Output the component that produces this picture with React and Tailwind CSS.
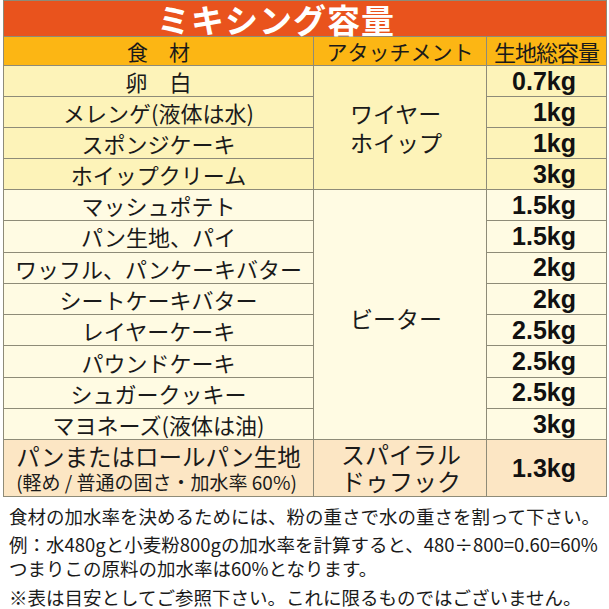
import React from "react";

const font = { fontFamily: '"Noto Sans CJK JP", "Noto Sans", sans-serif' };

const whipRows = [
  ["卵　白", "0.7kg"],
  ["メレンゲ(液体は水)", "1kg"],
  ["スポンジケーキ", "1kg"],
  ["ホイップクリーム", "3kg"],
];

const beaterRows = [
  ["マッシュポテト", "1.5kg"],
  ["パン生地、パイ", "1.5kg"],
  ["ワッフル、パンケーキバター", "2kg"],
  ["シートケーキバター", "2kg"],
  ["レイヤーケーキ", "2.5kg"],
  ["パウンドケーキ", "2.5kg"],
  ["シュガークッキー", "2.5kg"],
  ["マヨネーズ(液体は油)", "3kg"],
];

const cell = "border border-[#8e8b78]";
const kg =
  "pr-[30px] text-right font-bold text-[25px] leading-none text-[#111] [font-family:'Liberation_Sans',Arial,sans-serif]";

const App = () => {
  return (
    <div className="w-[609px] h-[609px] bg-white text-[#1a1a1a] overflow-hidden" style={font}>
      <div className="pl-[3px] pr-[3px]">
        <table className="w-[603px] border-collapse table-fixed">
          <colgroup>
            <col className="w-[310px]" />
            <col className="w-[173px]" />
            <col className="w-[120px]" />
          </colgroup>
          <tbody>
            <tr className="h-[36px] bg-[#e9531d]">
              <td colSpan={3} className={`${cell} p-0 text-center text-white font-bold text-[33px] leading-[34px] pr-[58px] tracking-[1px]`}>
                ミキシング容量
              </td>
            </tr>
            <tr className="h-[29px] bg-[#fcb614]">
              <td className={`${cell} text-center text-[21px] leading-none`}>食　材</td>
              <td className={`${cell} text-center text-[21px] leading-none`}>アタッチメント</td>
              <td className={`${cell} text-center text-[22px] leading-none tracking-[-1px]`}>生地総容量</td>
            </tr>
            {whipRows.map(([name, val], i) => (
              <tr key={name} className="h-[31px] bg-[#fdf3b9]">
                <td className={`${cell} text-center text-[22px] leading-none`}>{name}</td>
                {i === 0 && (
                  <td rowSpan={4} className={`${cell} text-center`}>
                    <div className="inline-block text-left text-[23px] leading-[29px] pr-[8px]">
                      <div>ワイヤー</div>
                      <div>ホイップ</div>
                    </div>
                  </td>
                )}
                <td className={`${cell} ${kg}`}>{val}</td>
              </tr>
            ))}
            {beaterRows.map(([name, val], i) => (
              <tr key={name} className="h-[31.3px] bg-[#fffbe3]">
                <td className={`${cell} text-center text-[22px] leading-none whitespace-nowrap`}>{name}</td>
                {i === 0 && (
                  <td rowSpan={8} className={`${cell} text-center text-[23px] leading-none pt-[8px] pr-[8px]`}>
                    ビーター
                  </td>
                )}
                <td className={`${cell} ${kg}`}>{val}</td>
              </tr>
            ))}
            <tr className="h-[56px] bg-[#fce6c4]">
              <td className={`${cell} p-0 text-center whitespace-nowrap`}>
                <div className="text-[23.5px] leading-[28px]">パンまたはロールパン生地</div>
                <div className="text-[19px] leading-[24px] -ml-[4px]">(軽め / 普通の固さ・加水率 60%)</div>
              </td>
              <td className={`${cell} p-0 text-center`}>
                <div className="inline-block text-left text-[24px] leading-[27px] pl-[2px]">
                  <div>スパイラル</div>
                  <div>ドゥフック</div>
                </div>
              </td>
              <td className={`${cell} ${kg}`}>1.3kg</td>
            </tr>
          </tbody>
        </table>
      </div>
      <div className="px-[9px] pt-[5px] text-[18.5px]">
        <p className="leading-[28px] whitespace-nowrap">食材の加水率を決めるためには、粉の重さで水の重さを割って下さい。</p>
        <p className="leading-[24px] mt-[2px] whitespace-nowrap">例：水480gと小麦粉800gの加水率を計算すると、480÷800=0.60=60%</p>
        <p className="leading-[24px] whitespace-nowrap">つまりこの原料の加水率は60%となります。</p>
        <p className="leading-[28px] mt-[3px] whitespace-nowrap">※表は目安としてご参照下さい。これに限るものではございません。</p>
      </div>
    </div>
  );
};

export default App;
